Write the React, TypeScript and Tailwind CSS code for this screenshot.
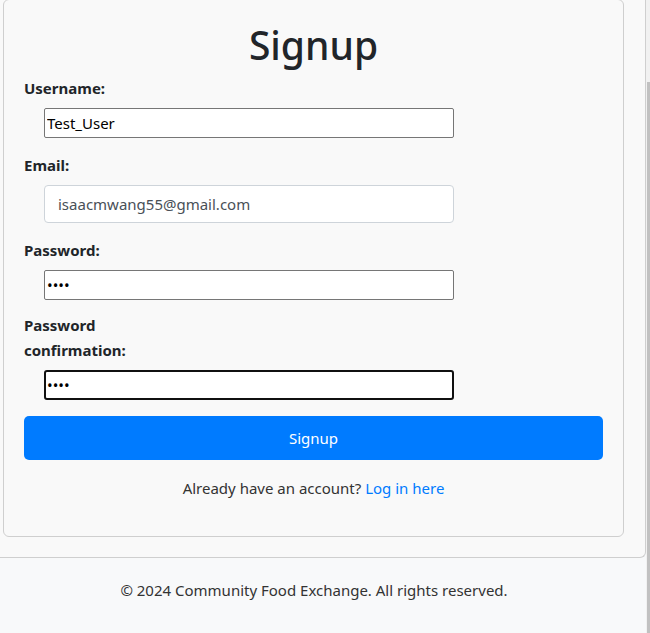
/**
 * Signup page — card form inside a bordered container, footer below.
 */

const font = { fontFamily: "'Noto Sans', 'Open Sans', sans-serif" };

function Label({ children, className = '' }: { children: React.ReactNode; className?: string }) {
  return <label className={`block text-[15px] font-bold leading-[25px] text-[#212529] ${className}`}>{children}</label>;
}

export default function App() {
  return (
    <div className="relative w-[650px] h-[633px] overflow-hidden bg-[#f8f9fa]" style={font}>
      {/* scrollbar strip */}
      <div className="absolute top-0 right-0 w-[4px] h-full bg-[#f1f1f1]">
        <div className="mt-[82px] ml-[1px] h-[560px] bg-[#c1c1c1]" />
      </div>

      {/* outer container */}
      <div className="-ml-[18px] w-[664px] bg-[#f9f9f9] border-r border-b border-[#cfcfcf] rounded-br-[6px] pl-[21px] pr-[21px] pb-[20px]">
        {/* card */}
        <div className="w-[621px] bg-[#f9f9f9] border border-[#cfcfcf] rounded-[6px] -mt-[1px] px-[20px] pt-[21px] pb-[36px]">
          <h1 className="text-center text-[39px] font-medium leading-[48px] text-[#212529]">Signup</h1>

          <Label className="mt-[7px]">Username:</Label>
          <div className="mt-[7px] ml-[20px]">
            <input
              className="w-[410px] h-[30px] bg-white border border-[#767676] rounded-[2px] px-[2px] text-[15px] text-black outline-none"
              defaultValue="Test_User"
              style={font}
            />
          </div>

          <Label className="mt-[15px]">Email:</Label>
          <div className="mt-[7px] ml-[20px]">
            <input
              className="w-[410px] h-[38px] bg-white border border-[#ced4da] rounded-[4px] px-[13px] text-[15px] text-[#495057] outline-none"
              defaultValue="isaacmwang55@gmail.com"
              style={font}
            />
          </div>

          <Label className="mt-[15px]">Password:</Label>
          <div className="mt-[7px] ml-[20px]">
            <input
              type="password"
              className="w-[410px] h-[30px] bg-white border border-[#767676] rounded-[2px] px-[2px] text-[15px] text-black outline-none"
              defaultValue="test"
              style={font}
            />
          </div>

          <Label className="mt-[13px] w-[110px]">Password confirmation:</Label>
          <div className="mt-[7px] ml-[20px]">
            <input
              type="password"
              className="w-[410px] h-[30px] bg-white border-2 border-[#101010] rounded-[3px] px-[1px] text-[15px] text-black outline-none"
              defaultValue="test"
              style={font}
            />
          </div>

          <button
            type="button"
            className="mt-[16px] w-full h-[44px] bg-[#007bff] text-white text-[15px] rounded-[5px]"
          >
            Signup
          </button>

          <p className="mt-[16px] text-center text-[15px] leading-[24px] text-[#333]">
            Already have an account? <a className="text-[#007bff]">Log in here</a>
          </p>
        </div>
      </div>

      {/* footer */}
      <footer className="w-[628px] pt-[20px] text-center text-[15px] leading-[24px] text-[#333]">
        © 2024 Community Food Exchange. All rights reserved.
      </footer>
    </div>
  );
}
